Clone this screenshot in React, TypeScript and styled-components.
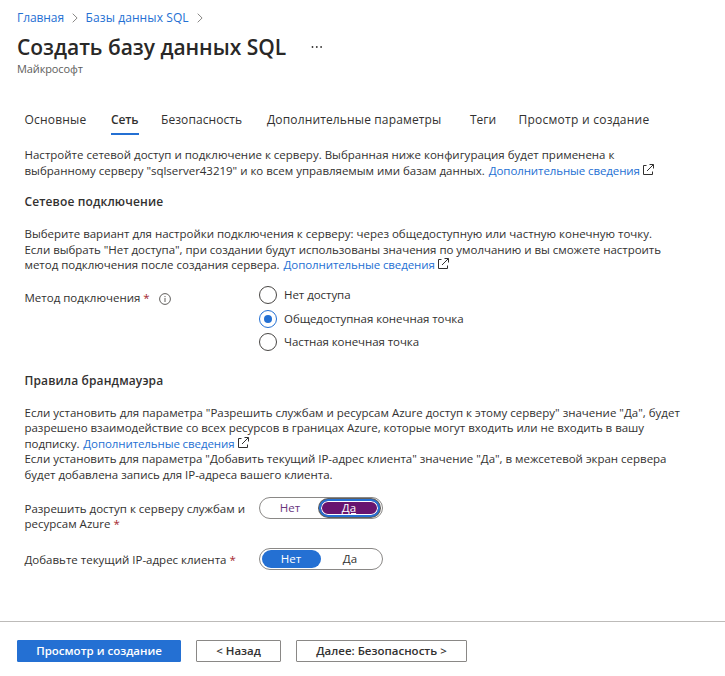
import React from 'react';
import styled, { createGlobalStyle } from 'styled-components';

const GlobalStyle = createGlobalStyle`
  *, *::before, *::after { box-sizing: border-box; }
  body {
    margin: 0;
    background: #fff;
    color: #323130;
    font: 400 11.5px/15.5px "Open Sans", "Noto Sans", sans-serif;
  }
  button { font: inherit; cursor: pointer; }
`;

const Page = styled.div`
  display: flex;
  flex-direction: column;
  width: 725px;
  height: 676px;
  overflow: hidden;
  white-space: nowrap;
`;

const Header = styled.header`
  height: 106px;
  padding: 9px 17px 0;
`;

const Breadcrumb = styled.nav`
  display: flex;
  align-items: center;
  height: 17px;
  font-size: 12px;
`;

const Crumb = styled.a<{ $tracking?: number }>`
  color: #2470d3;
  letter-spacing: ${p => p.$tracking ?? 0}px;
`;

const ChevronIcon = styled.svg`
  width: 6px;
  height: 10px;
  margin: 0 7.5px 0 8px;
  flex: none;
  fill: none;
  stroke: #8a8886;
`;

const TitleRow = styled.div`
  display: flex;
  align-items: center;
  height: 34px;
  margin-top: 4px;
`;

const Title = styled.h1`
  margin: 0;
  width: 294px;
  font-size: 21px;
  line-height: 34px;
  font-weight: 600;
  letter-spacing: -0.02px;
  color: #292827;
`;

const MoreIcon = styled.svg`
  width: 12px;
  height: 4px;
  fill: #323130;
`;

const Subtitle = styled.div`
  margin-top: -3px;
  font-size: 11px;
  line-height: 16px;
  letter-spacing: -0.12px;
  color: #605e5c;
`;

const TabList = styled.div`
  display: flex;
  align-items: flex-start;
  height: 41px;
  padding-left: 24.5px;
`;

const Tab = styled.button<{ $width: number; $gap: number; $tracking: number; $active?: boolean }>`
  width: ${p => p.$width}px;
  height: 29px;
  margin-right: ${p => p.$gap}px;
  padding: 1px 0 0;
  border: 0;
  border-bottom: 2px solid ${p => (p.$active ? '#2470d3' : 'transparent')};
  background: none;
  color: #323130;
  font-size: 12px;
  font-weight: ${p => (p.$active ? 600 : 400)};
  letter-spacing: ${p => p.$tracking}px;
  text-align: left;
`;

const Content = styled.main`
  display: flex;
  flex-direction: column;
  height: 474px;
  padding-left: 24.5px;
`;

const Paragraph = styled.p<{ $top?: number }>`
  margin: ${p => p.$top ?? 0}px 0 0;
`;

const Line = styled.span<{ $tracking?: number }>`
  display: block;
  height: 15.5px;
  letter-spacing: ${p => p.$tracking ?? 0}px;
`;

const Link = styled.a`
  margin-left: 1px;
  color: #2470d3;
  letter-spacing: -0.1px;
`;

const ExternalSvg = styled.svg`
  width: 11px;
  height: 11px;
  margin-left: 3.5px;
  vertical-align: 0;
  fill: none;
  stroke: #323130;
`;

const Heading = styled.h2<{ $top: number }>`
  margin: ${p => p.$top}px 0 0;
  font-size: 12px;
  line-height: 16px;
  font-weight: 600;
  letter-spacing: 0.13px;
`;

const Field = styled.div<{ $top: number }>`
  display: flex;
  align-items: flex-start;
  margin-top: ${p => p.$top}px;
`;

const Label = styled.div<{ $offset?: number }>`
  width: 234px;
  padding-top: ${p => p.$offset ?? 0}px;
`;

const Required = styled.span`
  color: #a4262c;
`;

const InfoSvg = styled.svg`
  width: 12px;
  height: 12px;
  margin-left: 9.5px;
  vertical-align: -3px;
  fill: none;
  stroke: #605e5c;
`;

const RadioGroup = styled.div`
  display: flex;
  flex-direction: column;
  gap: 5.5px;
`;

const RadioRow = styled.label<{ $tracking: number }>`
  display: flex;
  align-items: center;
  gap: 7.5px;
  height: 18px;
  letter-spacing: ${p => p.$tracking}px;
`;

const RadioMark = styled.span<{ $checked?: boolean }>`
  display: grid;
  place-items: center;
  width: 18px;
  height: 18px;
  border: 1.3px solid ${p => (p.$checked ? '#2470d3' : '#484644')};
  border-radius: 50%;

  &::after {
    content: "";
    width: 8px;
    height: 8px;
    border-radius: 50%;
    background: ${p => (p.$checked ? '#2470d3' : 'transparent')};
  }
`;

const Toggle = styled.div`
  display: flex;
  width: 124px;
  height: 22px;
  padding: 1px 2px;
  border: 1px solid #8a8886;
  border-radius: 11px;
`;

type OptionState = 'idle' | 'selected' | 'focused' | 'visited';

const ToggleOption = styled.button<{ $state: OptionState }>`
  flex: 1;
  height: 18px;
  padding: 0;
  border: ${p => (p.$state === 'focused' ? '2px solid #2470d3' : '0')};
  border-radius: 9px;
  background: ${p =>
    p.$state === 'selected' ? '#2470d3' : p.$state === 'focused' ? '#68146f' : 'transparent'};
  box-shadow: ${p =>
    p.$state === 'focused' ? 'inset 0 0 0 1px #fff, 0 0 0 1px #605e5c' : 'none'};
  color: ${p =>
    p.$state === 'idle' ? '#323130' : p.$state === 'visited' ? '#68357e' : '#fff'};
  line-height: ${p => (p.$state === 'focused' ? 14 : 18)}px;
  text-decoration: ${p => (p.$state === 'focused' ? 'underline' : 'none')};
`;

const Footer = styled.footer`
  display: flex;
  gap: 15px;
  height: 55px;
  padding: 18px 17px 0;
  border-top: 1px solid #bdbbb9;
`;

const Action = styled.button<{ $width: number; $primary?: boolean }>`
  width: ${p => p.$width}px;
  height: 22px;
  padding: 0;
  border: 1px solid ${p => (p.$primary ? '#2470d3' : '#8a8886')};
  border-radius: 1px;
  background: ${p => (p.$primary ? '#2470d3' : '#fff')};
  color: ${p => (p.$primary ? '#fff' : '#323130')};
  font-weight: 600;
  line-height: 20px;
`;

const Chevron = () => (
  <ChevronIcon viewBox="0 0 6 10"><path d="M.7.7 5.1 5 .7 9.3" /></ChevronIcon>
);

const ExternalIcon = () => (
  <ExternalSvg viewBox="0 0 11 11">
    <path d="M3.5 1.5h-3v9h9V7.5M6.5.5h4v4M10.3.7 4 7" />
  </ExternalSvg>
);

const InfoIcon = () => (
  <InfoSvg viewBox="0 0 12 12">
    <circle cx="6" cy="6" r="5.4" />
    <path d="M6 5v4M6 3v1.1" />
  </InfoSvg>
);

const MoreLink = () => (
  <><Link>Дополнительные сведения</Link><ExternalIcon /></>
);

export default function App() {
  return (
    <>
      <GlobalStyle />
      <Page>
        <Header>
          <Breadcrumb>
            <Crumb $tracking={-0.08}>Главная</Crumb>
            <Chevron />
            <Crumb $tracking={0.1}>Базы данных SQL</Crumb>
            <Chevron />
          </Breadcrumb>
          <TitleRow>
            <Title>Создать базу данных SQL</Title>
            <MoreIcon viewBox="0 0 12 4">
              <circle cx="1.5" cy="2" r=".9" />
              <circle cx="5.8" cy="2" r=".9" />
              <circle cx="10.1" cy="2" r=".9" />
            </MoreIcon>
          </TitleRow>
          <Subtitle>Майкрософт</Subtitle>
        </Header>

        <TabList>
          <Tab $width={62} $gap={24.5} $tracking={0.2}>Основные</Tab>
          <Tab $width={27.5} $gap={22.5} $tracking={-0.1} $active>Сеть</Tab>
          <Tab $width={82} $gap={24} $tracking={0.08}>Безопасность</Tab>
          <Tab $width={175} $gap={28} $tracking={0.14}>Дополнительные параметры</Tab>
          <Tab $width={27} $gap={21.5} $tracking={0}>Теги</Tab>
          <Tab $width={132} $gap={0} $tracking={0.25}>Просмотр и создание</Tab>
        </TabList>

        <Content>
          <Paragraph>
            <Line>Настройте сетевой доступ и подключение к серверу. Выбранная ниже конфигурация будет применена к</Line>
            <Line $tracking={-0.015}>выбранному серверу "sqlserver43219" и ко всем управляемым ими базам данных. <MoreLink /></Line>
          </Paragraph>

          <Heading $top={16}>Сетевое подключение</Heading>
          <Paragraph $top={16}>
            <Line $tracking={-0.013}>Выберите вариант для настройки подключения к серверу: через общедоступную или частную конечную точку.</Line>
            <Line $tracking={-0.03}>Если выбрать "Нет доступа", при создании будут использованы значения по умолчанию и вы сможете настроить</Line>
            <Line $tracking={-0.02}>метод подключения после создания сервера. <MoreLink /></Line>
          </Paragraph>

          <Field $top={13.5}>
            <Label $offset={4}>Метод подключения <Required>*</Required><InfoIcon /></Label>
            <RadioGroup>
              <RadioRow $tracking={-0.05}><RadioMark />Нет доступа</RadioRow>
              <RadioRow $tracking={-0.057}><RadioMark $checked />Общедоступная конечная точка</RadioRow>
              <RadioRow $tracking={-0.07}><RadioMark />Частная конечная точка</RadioRow>
            </RadioGroup>
          </Field>

          <Heading $top={21.5}>Правила брандмауэра</Heading>
          <Paragraph $top={16}>
            <Line>Если установить для параметра "Разрешить службам и ресурсам Azure доступ к этому серверу" значение "Да", будет</Line>
            <Line $tracking={-0.032}>разрешено взаимодействие со всех ресурсов в границах Azure, которые могут входить или не входить в вашу</Line>
            <Line $tracking={-0.05}>подписку. <MoreLink /></Line>
            <Line $tracking={-0.017}>Если установить для параметра "Добавить текущий IP-адрес клиента" значение "Да", в межсетевой экран сервера</Line>
            <Line $tracking={-0.028}>будет добавлена запись для IP-адреса вашего клиента.</Line>
          </Paragraph>

          <Field $top={14.5}>
            <Label $offset={4}>
              <Line>Разрешить доступ к серверу службам и</Line>
              <Line>ресурсам Azure <Required>*</Required></Line>
            </Label>
            <Toggle>
              <ToggleOption $state="visited">Нет</ToggleOption>
              <ToggleOption $state="focused">Да</ToggleOption>
            </Toggle>
          </Field>
          <Field $top={16}>
            <Label $offset={4}>Добавьте текущий IP-адрес клиента <Required>*</Required></Label>
            <Toggle>
              <ToggleOption $state="selected">Нет</ToggleOption>
              <ToggleOption $state="idle">Да</ToggleOption>
            </Toggle>
          </Field>
        </Content>

        <Footer>
          <Action $width={164} $primary>Просмотр и создание</Action>
          <Action $width={85}>&lt; Назад</Action>
          <Action $width={171}>Далее: Безопасность &gt;</Action>
        </Footer>
      </Page>
    </>
  );
}
